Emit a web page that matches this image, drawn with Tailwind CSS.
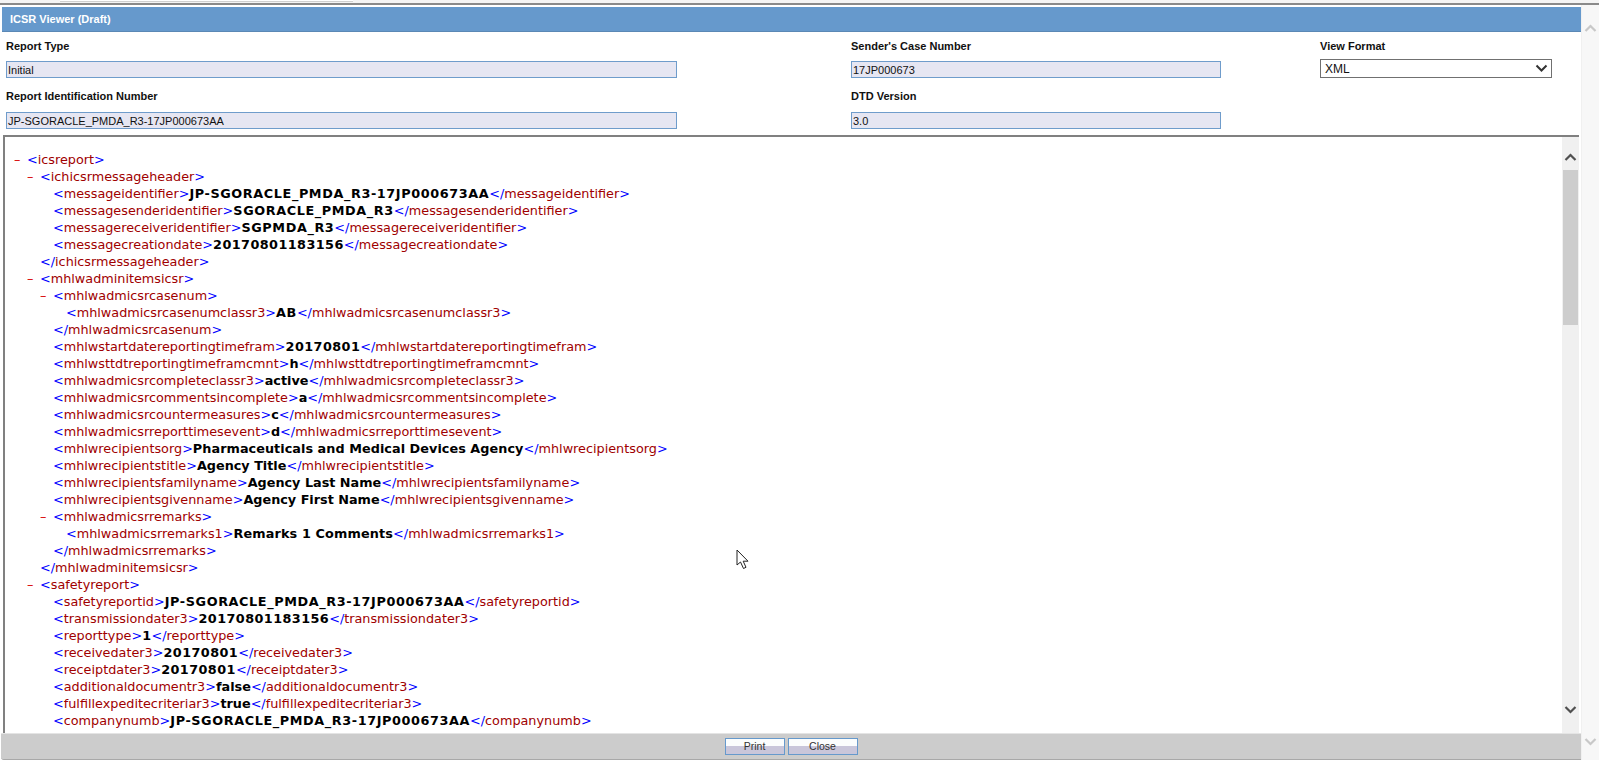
<!DOCTYPE html>
<html><head><meta charset="utf-8"><script src="https://cdn.jsdelivr.net/npm/@tailwindcss/browser@4"></script></head>
<body class="bg-white overflow-hidden font-['Liberation_Sans',Arial,sans-serif]">
<div class="relative w-[1599px] h-[760px] flex flex-col overflow-hidden">
  <div class="h-[5px] shrink-0 border-b-2 border-[#8a8a8a] bg-[#f4f4f4]"><div class="ml-[60px] w-[293px] h-[2px] bg-white border-b border-[#d0d0d0]"></div></div>
  <div class="flex-1 flex min-h-0">
    <main class="w-[1581px] flex flex-col min-h-0 pt-[2px] pl-[2px]">
      <header class="h-[25px] shrink-0 bg-[#6699cc] text-white font-bold text-[11px] leading-[24px] pl-[8px] border-b border-[#5b88b5]">ICSR Viewer (Draft)</header>
      <section class="h-[103px] shrink-0 flex text-[11px] text-[#111]">
        <div class="w-[847px] pl-[4px]">
          <label class="block font-bold pt-[8px] h-[29px] leading-[13px]">Report Type</label>
          <div class="w-[671px] h-[17px] border border-[#6f9ccb] bg-[#e6e6f2] pl-[1px] leading-[16px]">Initial</div>
          <label class="block font-bold pt-[12px] h-[34px] leading-[13px]">Report Identification Number</label>
          <div class="w-[671px] h-[17px] border border-[#6f9ccb] bg-[#e6e6f2] pl-[1px] leading-[16px]">JP-SGORACLE_PMDA_R3-17JP000673AA</div>
        </div>
        <div class="w-[471px] pl-[2px]">
          <label class="block font-bold pt-[8px] h-[29px] leading-[13px]">Sender's Case Number</label>
          <div class="w-[370px] h-[17px] border border-[#6f9ccb] bg-[#e6e6f2] pl-[1px] leading-[16px]">17JP000673</div>
          <label class="block font-bold pt-[12px] h-[34px] leading-[13px]">DTD Version</label>
          <div class="w-[370px] h-[17px] border border-[#6f9ccb] bg-[#e6e6f2] pl-[1px] leading-[16px]">3.0</div>
        </div>
        <div class="w-[240px]">
          <label class="block font-bold pt-[8px] h-[27px] leading-[13px]">View Format</label>
          <div class="w-[232px] h-[19px] border border-[#707070] bg-white flex items-center justify-between pl-[4px] pr-[3px] text-[12px]">
            <span>XML</span>
            <svg width="13" height="9" viewBox="0 0 13 9"><path d="M1.5 1.5 L6.5 6.5 L11.5 1.5" fill="none" stroke="#333" stroke-width="2"/></svg>
          </div>
        </div>
      </section>
      <div class="flex-1 flex min-h-0 border-t-2 border-[#808080] border-l-2 border-l-[#808080] ml-[1px] mr-[2px]">
        <div class="flex-1 overflow-hidden pt-[14px] pl-[9px] font-['DejaVu_Sans',Verdana,sans-serif] text-[12.8px] leading-[17px] text-[#a00000] whitespace-nowrap min-w-0">
          <div class="pl-0"><span class="inline-block w-[13px] text-[#d80000]">–</span><span class="text-[#0000ff]">&lt;</span>icsreport<span class="text-[#0000ff]">&gt;</span></div>
          <div class="pl-[13px]"><span class="inline-block w-[13px] text-[#d80000]">–</span><span class="text-[#0000ff]">&lt;</span>ichicsrmessageheader<span class="text-[#0000ff]">&gt;</span></div>
          <div class="pl-[39px]"><span class="text-[#0000ff]">&lt;</span>messageidentifier<span class="text-[#0000ff]">&gt;</span><b class="text-black tracking-[0.6px]">JP-SGORACLE_PMDA_R3-17JP000673AA</b><span class="text-[#0000ff]">&lt;/</span>messageidentifier<span class="text-[#0000ff]">&gt;</span></div>
          <div class="pl-[39px]"><span class="text-[#0000ff]">&lt;</span>messagesenderidentifier<span class="text-[#0000ff]">&gt;</span><b class="text-black tracking-[0.6px]">SGORACLE_PMDA_R3</b><span class="text-[#0000ff]">&lt;/</span>messagesenderidentifier<span class="text-[#0000ff]">&gt;</span></div>
          <div class="pl-[39px]"><span class="text-[#0000ff]">&lt;</span>messagereceiveridentifier<span class="text-[#0000ff]">&gt;</span><b class="text-black tracking-[0.6px]">SGPMDA_R3</b><span class="text-[#0000ff]">&lt;/</span>messagereceiveridentifier<span class="text-[#0000ff]">&gt;</span></div>
          <div class="pl-[39px]"><span class="text-[#0000ff]">&lt;</span>messagecreationdate<span class="text-[#0000ff]">&gt;</span><b class="text-black tracking-[0.43px]">20170801183156</b><span class="text-[#0000ff]">&lt;/</span>messagecreationdate<span class="text-[#0000ff]">&gt;</span></div>
          <div class="pl-[26px]"><span class="text-[#0000ff]">&lt;/</span>ichicsrmessageheader<span class="text-[#0000ff]">&gt;</span></div>
          <div class="pl-[13px]"><span class="inline-block w-[13px] text-[#d80000]">–</span><span class="text-[#0000ff]">&lt;</span>mhlwadminitemsicsr<span class="text-[#0000ff]">&gt;</span></div>
          <div class="pl-[26px]"><span class="inline-block w-[13px] text-[#d80000]">–</span><span class="text-[#0000ff]">&lt;</span>mhlwadmicsrcasenum<span class="text-[#0000ff]">&gt;</span></div>
          <div class="pl-[52px]"><span class="text-[#0000ff]">&lt;</span>mhlwadmicsrcasenumclassr3<span class="text-[#0000ff]">&gt;</span><b class="text-black tracking-[0.6px]">AB</b><span class="text-[#0000ff]">&lt;/</span>mhlwadmicsrcasenumclassr3<span class="text-[#0000ff]">&gt;</span></div>
          <div class="pl-[39px]"><span class="text-[#0000ff]">&lt;/</span>mhlwadmicsrcasenum<span class="text-[#0000ff]">&gt;</span></div>
          <div class="pl-[39px]"><span class="text-[#0000ff]">&lt;</span>mhlwstartdatereportingtimefram<span class="text-[#0000ff]">&gt;</span><b class="text-black tracking-[0.43px]">20170801</b><span class="text-[#0000ff]">&lt;/</span>mhlwstartdatereportingtimefram<span class="text-[#0000ff]">&gt;</span></div>
          <div class="pl-[39px]"><span class="text-[#0000ff]">&lt;</span>mhlwsttdtreportingtimeframcmnt<span class="text-[#0000ff]">&gt;</span><b class="text-black">h</b><span class="text-[#0000ff]">&lt;/</span>mhlwsttdtreportingtimeframcmnt<span class="text-[#0000ff]">&gt;</span></div>
          <div class="pl-[39px]"><span class="text-[#0000ff]">&lt;</span>mhlwadmicsrcompleteclassr3<span class="text-[#0000ff]">&gt;</span><b class="text-black">active</b><span class="text-[#0000ff]">&lt;/</span>mhlwadmicsrcompleteclassr3<span class="text-[#0000ff]">&gt;</span></div>
          <div class="pl-[39px]"><span class="text-[#0000ff]">&lt;</span>mhlwadmicsrcommentsincomplete<span class="text-[#0000ff]">&gt;</span><b class="text-black">a</b><span class="text-[#0000ff]">&lt;/</span>mhlwadmicsrcommentsincomplete<span class="text-[#0000ff]">&gt;</span></div>
          <div class="pl-[39px]"><span class="text-[#0000ff]">&lt;</span>mhlwadmicsrcountermeasures<span class="text-[#0000ff]">&gt;</span><b class="text-black">c</b><span class="text-[#0000ff]">&lt;/</span>mhlwadmicsrcountermeasures<span class="text-[#0000ff]">&gt;</span></div>
          <div class="pl-[39px]"><span class="text-[#0000ff]">&lt;</span>mhlwadmicsrreporttimesevent<span class="text-[#0000ff]">&gt;</span><b class="text-black">d</b><span class="text-[#0000ff]">&lt;/</span>mhlwadmicsrreporttimesevent<span class="text-[#0000ff]">&gt;</span></div>
          <div class="pl-[39px]"><span class="text-[#0000ff]">&lt;</span>mhlwrecipientsorg<span class="text-[#0000ff]">&gt;</span><b class="text-black tracking-[0.05px]">Pharmaceuticals and Medical Devices Agency</b><span class="text-[#0000ff]">&lt;/</span>mhlwrecipientsorg<span class="text-[#0000ff]">&gt;</span></div>
          <div class="pl-[39px]"><span class="text-[#0000ff]">&lt;</span>mhlwrecipientstitle<span class="text-[#0000ff]">&gt;</span><b class="text-black">Agency Title</b><span class="text-[#0000ff]">&lt;/</span>mhlwrecipientstitle<span class="text-[#0000ff]">&gt;</span></div>
          <div class="pl-[39px]"><span class="text-[#0000ff]">&lt;</span>mhlwrecipientsfamilyname<span class="text-[#0000ff]">&gt;</span><b class="text-black">Agency Last Name</b><span class="text-[#0000ff]">&lt;/</span>mhlwrecipientsfamilyname<span class="text-[#0000ff]">&gt;</span></div>
          <div class="pl-[39px]"><span class="text-[#0000ff]">&lt;</span>mhlwrecipientsgivenname<span class="text-[#0000ff]">&gt;</span><b class="text-black">Agency First Name</b><span class="text-[#0000ff]">&lt;/</span>mhlwrecipientsgivenname<span class="text-[#0000ff]">&gt;</span></div>
          <div class="pl-[26px]"><span class="inline-block w-[13px] text-[#d80000]">–</span><span class="text-[#0000ff]">&lt;</span>mhlwadmicsrremarks<span class="text-[#0000ff]">&gt;</span></div>
          <div class="pl-[52px]"><span class="text-[#0000ff]">&lt;</span>mhlwadmicsrremarks1<span class="text-[#0000ff]">&gt;</span><b class="text-black tracking-[0.14px]">Remarks 1 Comments</b><span class="text-[#0000ff]">&lt;/</span>mhlwadmicsrremarks1<span class="text-[#0000ff]">&gt;</span></div>
          <div class="pl-[39px]"><span class="text-[#0000ff]">&lt;/</span>mhlwadmicsrremarks<span class="text-[#0000ff]">&gt;</span></div>
          <div class="pl-[26px]"><span class="text-[#0000ff]">&lt;/</span>mhlwadminitemsicsr<span class="text-[#0000ff]">&gt;</span></div>
          <div class="pl-[13px]"><span class="inline-block w-[13px] text-[#d80000]">–</span><span class="text-[#0000ff]">&lt;</span>safetyreport<span class="text-[#0000ff]">&gt;</span></div>
          <div class="pl-[39px]"><span class="text-[#0000ff]">&lt;</span>safetyreportid<span class="text-[#0000ff]">&gt;</span><b class="text-black tracking-[0.6px]">JP-SGORACLE_PMDA_R3-17JP000673AA</b><span class="text-[#0000ff]">&lt;/</span>safetyreportid<span class="text-[#0000ff]">&gt;</span></div>
          <div class="pl-[39px]"><span class="text-[#0000ff]">&lt;</span>transmissiondater3<span class="text-[#0000ff]">&gt;</span><b class="text-black tracking-[0.43px]">20170801183156</b><span class="text-[#0000ff]">&lt;/</span>transmissiondater3<span class="text-[#0000ff]">&gt;</span></div>
          <div class="pl-[39px]"><span class="text-[#0000ff]">&lt;</span>reporttype<span class="text-[#0000ff]">&gt;</span><b class="text-black tracking-[0.43px]">1</b><span class="text-[#0000ff]">&lt;/</span>reporttype<span class="text-[#0000ff]">&gt;</span></div>
          <div class="pl-[39px]"><span class="text-[#0000ff]">&lt;</span>receivedater3<span class="text-[#0000ff]">&gt;</span><b class="text-black tracking-[0.43px]">20170801</b><span class="text-[#0000ff]">&lt;/</span>receivedater3<span class="text-[#0000ff]">&gt;</span></div>
          <div class="pl-[39px]"><span class="text-[#0000ff]">&lt;</span>receiptdater3<span class="text-[#0000ff]">&gt;</span><b class="text-black tracking-[0.43px]">20170801</b><span class="text-[#0000ff]">&lt;/</span>receiptdater3<span class="text-[#0000ff]">&gt;</span></div>
          <div class="pl-[39px]"><span class="text-[#0000ff]">&lt;</span>additionaldocumentr3<span class="text-[#0000ff]">&gt;</span><b class="text-black">false</b><span class="text-[#0000ff]">&lt;/</span>additionaldocumentr3<span class="text-[#0000ff]">&gt;</span></div>
          <div class="pl-[39px]"><span class="text-[#0000ff]">&lt;</span>fulfillexpeditecriteriar3<span class="text-[#0000ff]">&gt;</span><b class="text-black">true</b><span class="text-[#0000ff]">&lt;/</span>fulfillexpeditecriteriar3<span class="text-[#0000ff]">&gt;</span></div>
          <div class="pl-[39px]"><span class="text-[#0000ff]">&lt;</span>companynumb<span class="text-[#0000ff]">&gt;</span><b class="text-black tracking-[0.6px]">JP-SGORACLE_PMDA_R3-17JP000673AA</b><span class="text-[#0000ff]">&lt;/</span>companynumb<span class="text-[#0000ff]">&gt;</span></div>
        </div>
        <div class="w-[17px] shrink-0 bg-[#f0f0f0] flex flex-col items-center justify-between">
          <div class="w-full">
            <div class="h-[33px] flex items-center justify-center pt-[8px]"><svg width="13" height="9" viewBox="0 0 13 9"><path d="M1.5 7 L6.5 2 L11.5 7" fill="none" stroke="#505050" stroke-width="2.2"/></svg></div>
            <div class="mx-auto w-[15px] h-[155px] bg-[#cdcdcd]"></div>
          </div>
          <div class="h-[31px] flex items-start justify-center pt-[3px]"><svg width="13" height="9" viewBox="0 0 13 9"><path d="M1.5 2 L6.5 7 L11.5 2" fill="none" stroke="#505050" stroke-width="2.2"/></svg></div>
        </div>
      </div>
      <footer class="h-[27px] shrink-0 bg-[#cccccc] border-t border-[#e4e4e4] border-b border-b-[#a8a8a8] flex justify-center items-center gap-[3px] rounded-bl-[3px] -ml-[1px] text-[10.5px] text-[#333]">
        <button class="w-[60px] h-[17px] border border-[#6699cc] bg-[linear-gradient(#fbfdfd_0%,#fbfdfd_50%,#c9c6da_50%,#c9c6da_100%)] leading-[15px] -mt-[1px]">Print</button>
        <button class="w-[70px] h-[17px] border border-[#6699cc] bg-[linear-gradient(#fbfdfd_0%,#fbfdfd_50%,#c9c6da_50%,#c9c6da_100%)] leading-[15px] -mt-[1px]">Close</button>
      </footer>
    </main>
    <aside class="w-[18px] shrink-0 bg-[#f7f7f7] flex flex-col justify-between items-center border-l border-[#f0f0f0]">
      <div class="pt-[19px]"><svg width="13" height="9" viewBox="0 0 13 9"><path d="M1.5 7 L6.5 2 L11.5 7" fill="none" stroke="#c8c8c8" stroke-width="2.2"/></svg></div>
      <div class="pb-[14px]"><svg width="13" height="9" viewBox="0 0 13 9"><path d="M1.5 2 L6.5 7 L11.5 2" fill="none" stroke="#c8c8c8" stroke-width="2.2"/></svg></div>
    </aside>
  </div>
  <svg class="absolute left-[736px] top-[549px]" width="15" height="21" viewBox="0 0 15 21"><path d="M1 1 V16 L4.5 13 L7.5 19.5 L10 18.3 L7.2 12.2 H12 Z" fill="#fff" stroke="#222" stroke-width="1"/></svg>
</div>
</body></html>
